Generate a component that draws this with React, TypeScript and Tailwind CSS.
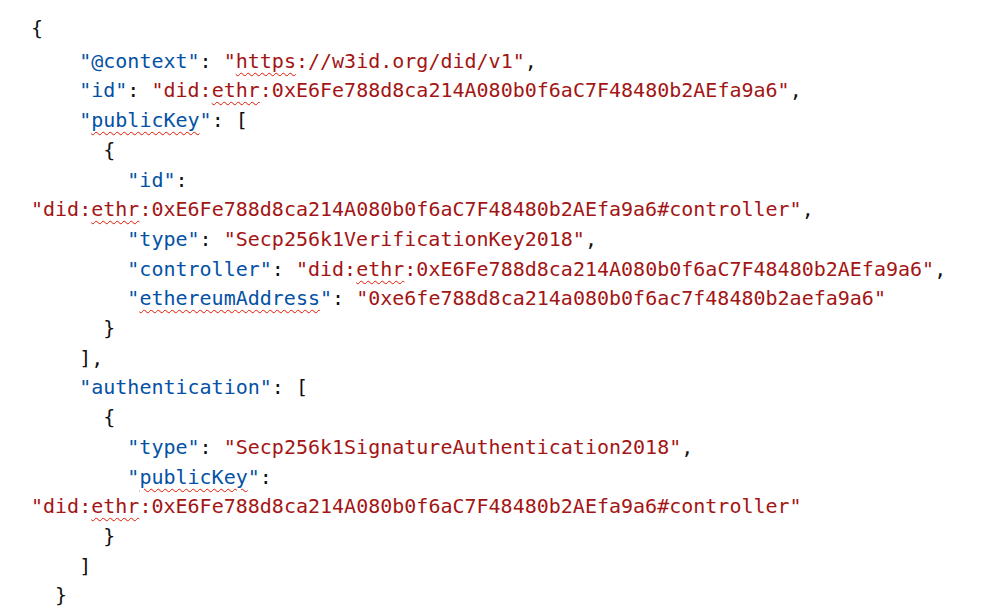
import React from "react";

type Seg = { t: string; c?: "k" | "s"; u?: boolean };

const ADDR = "0xE6Fe788d8ca214A080b0f6aC7F48480b2AEfa9a6";

// 키
const key = (name: string, spell = false): Seg[] =>
  spell
    ? [{ t: '"', c: "k" }, { t: name, c: "k", u: true }, { t: '"', c: "k" }]
    : [{ t: `"${name}"`, c: "k" }];

// did 문자열
const did = (suffix = ""): Seg[] => [
  { t: '"did:', c: "s" },
  { t: "ethr", c: "s", u: true },
  { t: `:${ADDR}${suffix}"`, c: "s" },
];

const LINES: { indent: number; segs: Seg[] }[] = [
  { indent: 0, segs: [{ t: "{" }] },
  {
    indent: 4,
    segs: [
      ...key("@context"),
      { t: ": " },
      { t: '"', c: "s" },
      { t: "https", c: "s", u: true },
      { t: '://w3id.org/did/v1"', c: "s" },
      { t: "," },
    ],
  },
  { indent: 4, segs: [...key("id"), { t: ": " }, ...did(), { t: "," }] },
  { indent: 4, segs: [...key("publicKey", true), { t: ": [" }] },
  { indent: 6, segs: [{ t: "{" }] },
  { indent: 8, segs: [...key("id"), { t: ":" }] },
  { indent: 0, segs: [...did("#controller"), { t: "," }] },
  {
    indent: 8,
    segs: [
      ...key("type"),
      { t: ": " },
      { t: '"Secp256k1VerificationKey2018"', c: "s" },
      { t: "," },
    ],
  },
  { indent: 8, segs: [...key("controller"), { t: ": " }, ...did(), { t: "," }] },
  {
    indent: 8,
    segs: [
      ...key("ethereumAddress", true),
      { t: ": " },
      { t: '"0xe6fe788d8ca214a080b0f6ac7f48480b2aefa9a6"', c: "s" },
    ],
  },
  { indent: 6, segs: [{ t: "}" }] },
  { indent: 4, segs: [{ t: "]," }] },
  { indent: 4, segs: [...key("authentication"), { t: ": [" }] },
  { indent: 6, segs: [{ t: "{" }] },
  {
    indent: 8,
    segs: [
      ...key("type"),
      { t: ": " },
      { t: '"Secp256k1SignatureAuthentication2018"', c: "s" },
      { t: "," },
    ],
  },
  { indent: 8, segs: [...key("publicKey", true), { t: ":" }] },
  { indent: 0, segs: [...did("#controller")] },
  { indent: 6, segs: [{ t: "}" }] },
  { indent: 4, segs: [{ t: "]" }] },
  { indent: 2, segs: [{ t: "}" }] },
];

const segClass = (s: Seg) => {
  let cls = s.c === "k" ? "text-[#0451a5]" : s.c === "s" ? "text-[#a31515]" : "text-[#111]";
  if (s.u) cls += " underline decoration-wavy decoration-[#e51400] decoration-[1.2px] underline-offset-[4px]";
  return cls;
};

export default function App() {
  return (
    <div className="w-[998px] h-[610px] bg-white overflow-hidden">
      <pre
        className="pl-[31px] pt-[14px] text-[20px] leading-[29.7px]"
        style={{ fontFamily: '"DejaVu Sans Mono", monospace' }}
      >
        {LINES.map((line, i) => (
          <div key={i} className={i === 1 ? "mt-[3px]" : ""}>
            {" ".repeat(line.indent)}
            {line.segs.map((s, j) => (
              <span key={j} className={segClass(s)}>
                {s.t}
              </span>
            ))}
          </div>
        ))}
      </pre>
    </div>
  );
}
